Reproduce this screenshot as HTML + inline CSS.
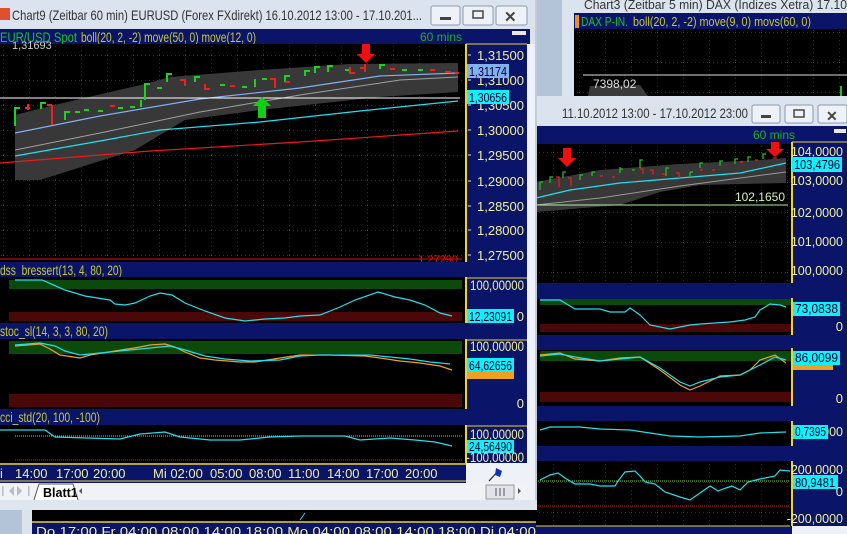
<!DOCTYPE html>
<html><head><meta charset="utf-8"><style>
html,body{margin:0;padding:0;width:847px;height:534px;overflow:hidden;background:#c8d4e4}
svg{display:block}
text{font-family:"Liberation Sans",sans-serif}
</style></head><body>
<svg width="847" height="534" viewBox="0 0 847 534" xmlns="http://www.w3.org/2000/svg">
<defs>
<pattern id="g" width="26" height="25" patternUnits="userSpaceOnUse" x="3" y="5">
<line x1="0" y1="0" x2="0" y2="25" stroke="#5a5a5a" stroke-dasharray="1,3"/>
<line x1="0" y1="0" x2="26" y2="0" stroke="#5a5a5a" stroke-dasharray="1,3"/>
</pattern>
<pattern id="g2" width="26" height="30" patternUnits="userSpaceOnUse" x="7" y="2">
<line x1="0" y1="0" x2="0" y2="30" stroke="#5a5a5a" stroke-dasharray="1,3"/>
<line x1="0" y1="0" x2="26" y2="0" stroke="#5a5a5a" stroke-dasharray="1,3"/>
</pattern>
</defs>

<rect x="0" y="0" width="847" height="534" fill="#c6d2e2"/>

<!-- BACK WINDOW DAX -->
<rect x="536" y="0" width="26" height="100" fill="#b4c4d8"/>
<rect x="562" y="0" width="285" height="100" fill="#dbe3ee"/>
<text x="584" y="9" font-size="13" fill="#333" textLength="263" lengthAdjust="spacingAndGlyphs">Chart3 (Zeitbar 5 min)  DAX (Indizes Xetra) 17.10</text>
<rect x="574" y="13" width="273" height="16" fill="#0a1468"/>
<rect x="575" y="15" width="4" height="13" fill="#f09010"/>
<text x="581" y="26" font-size="13" fill="#20c020" textLength="47" lengthAdjust="spacingAndGlyphs">DAX P-IN.</text>
<text x="633" y="26" font-size="13" fill="#c8c830" textLength="178" lengthAdjust="spacingAndGlyphs">boll(20, 2, -2) move(9, 0) movs(60, 0)</text>
<rect x="574" y="29" width="273" height="70" fill="#000"/>
<rect x="574" y="29" width="273" height="70" fill="url(#g2)"/>
<line x1="583" y1="75" x2="847" y2="75" stroke="#ddd" stroke-width="1"/>
<path d="M588 96 L590 86 L640 85 L648 96Z" fill="#3a3a3a"/>
<text x="593" y="88" font-size="12" fill="#ddd">7398,02</text>
<rect x="840" y="86" width="2" height="10" fill="#20c020"/>

<!-- RIGHT FRONT WINDOW -->
<rect x="536" y="96" width="311" height="438" fill="#dbe3ee"/>
<text x="562" y="118" font-size="13.5" fill="#333" textLength="186" lengthAdjust="spacingAndGlyphs">11.10.2012 13:00 - 17.10.2012 23:00</text>
<g fill="#eef2f8" stroke="#8a98aa"><rect x="752" y="105" width="28" height="18" rx="2"/><rect x="785" y="105" width="28" height="18" rx="2"/><rect x="818" y="105" width="29" height="18" rx="2"/></g>
<rect x="761" y="115" width="10" height="3" fill="#444"/>
<rect x="794" y="110" width="10" height="7" fill="none" stroke="#444" stroke-width="1.5"/>
<text x="826" y="121" font-size="14" fill="#444" font-weight="bold">✕</text>
<rect x="536" y="126" width="311" height="18" fill="#0a1468"/>
<rect x="834" y="129" width="12" height="4" fill="#e8e8e8"/>
<text x="753" y="139" font-size="12" fill="#20b020">60 mins</text>
<rect x="536" y="144" width="256" height="139" fill="#000"/>
<rect x="536" y="144" width="256" height="139" fill="url(#g2)"/>
<rect x="792" y="142" width="55" height="141" fill="#0a1468"/>
<line x1="792" y1="142" x2="792" y2="283" stroke="#e8d040" stroke-width="2"/>
<line x1="792" y1="142" x2="847" y2="142" stroke="#e8d040" stroke-width="1"/>
<path d="M536 182 L600 170 L680 164 L760 160 L786 158 L786 183 L700 185 L660 192 L620 205 L536 212Z" fill="#383838"/>
<polyline points="536,205 600,198 680,186 786,172" fill="none" stroke="#999" stroke-width="1"/>
<polyline points="536,198 570,190 620,183 680,178 740,173 786,163" fill="none" stroke="#20e0f0" stroke-width="1.2"/>
<line x1="536" y1="205" x2="788" y2="205" stroke="#b0f0a0" stroke-width="1"/>
<text x="785" y="201" font-size="12" fill="#d0f0c0" text-anchor="end">102,1650</text>
<g stroke="#20c020" stroke-width="1.3" fill="none">
<path d="M540 190v-8h3M550 183v-6h3M563 178v-6h3M580 180v-5h3M592 176v-4h3M620 173v-6M620 169h3M632 170h3M640 168v-8h3M666 176v-8h3M690 178v-6M690 172h3M700 168v-5h3M720 166v-5h3M735 164v-5h3M748 162v-5h3M763 159v-5h3"/>
</g>
<g stroke="#e02020" stroke-width="1.3" fill="none">
<path d="M556 177h3v10M568 178h3v8M600 176h3M612 177h3M640 169h3v5M650 170h3v5M662 174h3M676 173h3v5M700 170h3M712 170h3M740 162h3M755 160h3M773 158h4"/>
</g>
<path d="M563 148h8v10h5l-9 9-9-9h5z" fill="#f01010"/>
<path d="M771 142h8v7h5l-9 8-9-8h5z" fill="#f01010"/>
<g font-size="12.5" fill="#f0f0a0" text-anchor="end"><text x="843" y="156">104,0000</text><text x="843" y="185">103,0000</text><text x="843" y="217">102,0000</text><text x="843" y="246">101,0000</text><text x="843" y="275">100,0000</text></g>
<rect x="792" y="157" width="50" height="15" fill="#10f0f8"/>
<text x="794" y="169" font-size="12.5" fill="#003" textLength="46" lengthAdjust="spacingAndGlyphs">103,4796</text>
<!-- right panels -->
<rect x="536" y="283" width="311" height="16" fill="#0a1468"/>
<rect x="536" y="299" width="256" height="36" fill="#000"/>
<rect x="540" y="299" width="252" height="6" fill="#0c4a0c"/><rect x="540" y="324" width="252" height="8" fill="#4a0808"/>
<polyline points="540,300 560,300 575,309 600,309 610,312 625,312 630,308 640,315 650,325 670,329 680,327 690,325 700,324 730,322 745,320 755,317 760,310 770,304 780,305 786,307" fill="none" stroke="#20e0f0" stroke-width="1.2"/>
<rect x="792" y="298" width="55" height="37" fill="#0a1468"/><line x1="792" y1="298" x2="792" y2="335" stroke="#e8d040" stroke-width="2"/>
<rect x="793" y="302" width="47" height="14" fill="#10f0f8"/><text x="795" y="313" font-size="12.5" fill="#003" textLength="43" lengthAdjust="spacingAndGlyphs">73,0838</text>
<text x="843" y="331" font-size="13" fill="#f0f0a0" text-anchor="end">0</text>
<rect x="536" y="335" width="311" height="15" fill="#0a1468"/>
<rect x="536" y="350" width="256" height="56" fill="#000"/>
<rect x="540" y="351" width="252" height="10" fill="#0c4a0c"/><rect x="540" y="392" width="252" height="10" fill="#4a0808"/>
<polyline points="540,355 560,353 575,359 600,361 620,358 640,357 660,370 680,385 690,390 700,386 720,376 740,375 750,370 760,360 775,355 786,363" fill="none" stroke="#f0a020" stroke-width="1.2"/>
<polyline points="540,356 560,354 575,357 600,361 620,359 640,357 660,368 680,382 690,386 700,382 720,377 740,375 760,365 775,357 786,360" fill="none" stroke="#20e0f0" stroke-width="1.2"/>
<rect x="792" y="348" width="55" height="58" fill="#0a1468"/><line x1="792" y1="348" x2="792" y2="406" stroke="#e8d040" stroke-width="2"/>
<rect x="793" y="360" width="40" height="10" fill="#f0a020"/>
<rect x="793" y="351" width="47" height="14" fill="#10f0f8"/><text x="795" y="362" font-size="12.5" fill="#003" textLength="43" lengthAdjust="spacingAndGlyphs">86,0099</text>
<text x="843" y="403" font-size="13" fill="#f0f0a0" text-anchor="end">0</text>
<rect x="536" y="406" width="311" height="15" fill="#0a1468"/>
<rect x="536" y="421" width="256" height="25" fill="#000"/>
<polyline points="540,430 550,427 580,427 600,429 630,430 650,433 670,436 700,437 740,436 760,433 786,432" fill="none" stroke="#20e0f0" stroke-width="1.2"/>
<rect x="792" y="421" width="55" height="25" fill="#0a1468"/><line x1="792" y1="421" x2="792" y2="446" stroke="#e8d040" stroke-width="2"/>
<text x="843" y="436" font-size="12.5" fill="#f0f0a0" text-anchor="end">000</text>
<rect x="793" y="425" width="35" height="14" fill="#10f0f8"/><text x="795" y="436" font-size="12.5" fill="#003" textLength="31" lengthAdjust="spacingAndGlyphs">0,7395</text>
<rect x="536" y="446" width="311" height="15" fill="#0a1468"/>
<rect x="536" y="461" width="256" height="65" fill="#000"/>
<rect x="536" y="461" width="256" height="65" fill="url(#g2)"/>
<line x1="536" y1="481" x2="790" y2="481" stroke="#80e040" stroke-dasharray="1,1"/>
<line x1="536" y1="506" x2="790" y2="506" stroke="#e02020" stroke-dasharray="1,1"/>
<polyline points="540,480 550,475 558,473 565,478 575,484 590,484 600,486 615,486 618,481 625,472 635,471 640,476 645,482 655,484 665,492 680,497 690,500 700,493 710,486 718,491 726,488 732,486 740,490 748,482 760,479 775,476 780,470 790,471" fill="none" stroke="#20e0f0" stroke-width="1.2"/>
<rect x="792" y="461" width="55" height="65" fill="#0a1468"/><line x1="792" y1="461" x2="792" y2="526" stroke="#e8d040" stroke-width="2"/>
<text x="843" y="474" font-size="12.5" fill="#f0f0a0" text-anchor="end">200,0000</text>
<rect x="793" y="475" width="45" height="14" fill="#10f0f8"/><text x="795" y="487" font-size="12.5" fill="#003" textLength="40" lengthAdjust="spacingAndGlyphs">80,9481</text>
<text x="843" y="496" font-size="13" fill="#f0f0a0" text-anchor="end">0</text>
<text x="843" y="523" font-size="12.5" fill="#f0f0a0" text-anchor="end">-200,0000</text>
<rect x="536" y="526" width="256" height="8" fill="#0a1468"/><line x1="536" y1="526" x2="790" y2="526" stroke="#e8d040"/>
<rect x="792" y="526" width="55" height="8" fill="#eef2f8"/>

<!-- below left window -->
<rect x="0" y="510" width="22" height="24" fill="#b4c4d8"/>
<rect x="22" y="510" width="10" height="24" fill="#dbe3ee"/>
<rect x="32" y="510" width="504" height="12" fill="#000"/>
<rect x="32" y="522" width="504" height="12" fill="#0a1468"/><line x1="32" y1="522" x2="536" y2="522" stroke="#e8d040" stroke-width="1.5"/>
<text x="36" y="536" font-size="13" fill="#f0f0a0" textLength="500" lengthAdjust="spacingAndGlyphs">Do  17:00    Fr  04:00 08:00 14:00 18:00   Mo 04:00 08:00 14:00 18:00   Di 04:00</text>
<polyline points="300,520 305,513" stroke="#20e0f0" fill="none"/>

<!-- LEFT FRONT WINDOW -->
<rect x="0" y="0" width="537" height="510" fill="#dbe3ee"/>
<line x1="536" y1="0" x2="536" y2="510" stroke="#a8b4c4"/>
<rect x="0" y="8" width="10" height="12" fill="#e05030"/>
<text x="12" y="20" font-size="14" fill="#333" textLength="410" lengthAdjust="spacingAndGlyphs">Chart9 (Zeitbar 60 min)  EURUSD (Forex FXdirekt) 16.10.2012 13:00 - 17.10.201...</text>
<g fill="#eef2f8" stroke="#8a98aa"><rect x="431" y="6" width="29" height="19" rx="2"/><rect x="463" y="6" width="30" height="19" rx="2"/><rect x="496" y="6" width="31" height="19" rx="2"/></g>
<rect x="440" y="17" width="11" height="3" fill="#444"/>
<rect x="473" y="11" width="10" height="7" fill="none" stroke="#444" stroke-width="1.5"/>
<text x="504" y="22" font-size="15" fill="#444" font-weight="bold">✕</text>
<rect x="0" y="29" width="530" height="15" fill="#0a1468"/>
<rect x="512" y="31" width="14" height="4" fill="#e8e8e8"/>
<text x="0" y="42" font-size="14" fill="#20c020" textLength="77" lengthAdjust="spacingAndGlyphs">EUR/USD Spot</text>
<text x="81" y="42" font-size="14" fill="#c8c830" textLength="175" lengthAdjust="spacingAndGlyphs">boll(20, 2, -2) move(50, 0) move(12, 0)</text>
<text x="462" y="41" font-size="12" fill="#20b020" text-anchor="end">60 mins</text>
<!-- main chart -->
<rect x="0" y="44" width="466" height="218" fill="#000"/>
<rect x="0" y="44" width="466" height="218" fill="url(#g)"/>
<text x="12" y="49" font-size="11" fill="#ccc">1,31693</text>
<path d="M15 115 L50 106 L145 84 L170 77 L260 70 L350 64 L458 63 L458 92 L380 97 L260 110 L185 120 L135 150 L40 180 L15 180Z" fill="#383838"/>
<polyline points="15,133 45,127 100,116 200,99 300,88 380,76 458,73" fill="none" stroke="#80b0f0" stroke-width="1.2"/>
<polyline points="15,150 100,133 200,112 300,95 400,80 458,77" fill="none" stroke="#a0a0a0" stroke-width="1"/>
<polyline points="15,156 100,141 160,130 260,122 360,111 458,101" fill="none" stroke="#20e0f0" stroke-width="1.2"/>
<polyline points="0,163 150,151 300,142 458,131" fill="none" stroke="#f01818" stroke-width="1.2"/>
<line x1="0" y1="98" x2="460" y2="98" stroke="#fff" stroke-width="1"/>
<line x1="0" y1="259" x2="462" y2="259" stroke="#e01010" stroke-width="1"/>
<text x="458" y="263" font-size="11" fill="#e01010" text-anchor="end">1,27290</text>
<g stroke="#20d020" stroke-width="2" fill="none">
<path d="M15 126v-18h5M41 109v-6h5M65 120v-8h5M75 112h5M84 110h5M98 111h5M118 108h5M130 107h5M141 107v-7M145 100v-16h5M157 88h5M167 82v-8h5M195 82v-5h5M220 85h5M242 87h5M255 87v-8M262 79h5M285 82v-6h5M305 76v-5h5M315 73v-6h5M328 72v-6h5M345 70h5M380 69v-4h5M402 70h5M418 70h5"/>
</g>
<g stroke="#f02020" stroke-width="2" fill="none">
<path d="M25 108h5M28 104v6M52 105v20M52 105h-5M110 106h5M180 80h5v6M205 84v5h5M230 86h5M270 79h5v9M285 82h5M350 67v6h5M360 68h5M365 64v8M390 69h5M430 70h5M445 72h6M455 73h4"/>
</g>
<path d="M362 44h8v10h5l-9 9-9-9h5z" fill="#f01010"/>
<path d="M262 97l9 9h-5v12h-8v-12h-5z" fill="#10d010"/>
<!-- price axis -->
<rect x="466" y="44" width="61" height="218" fill="#0a1468"/>
<line x1="466" y1="44" x2="466" y2="262" stroke="#e8d040" stroke-width="2"/>
<line x1="466" y1="44" x2="527" y2="44" stroke="#e8d040"/>
<g stroke="#ddd"><path d="M468 55h3M468 80h3M468 105h3M468 130h3M468 155h3M468 181h3M468 206h3M468 230h3M468 255h3"/></g>
<g font-size="13" fill="#f0f0a0" text-anchor="end"><text x="524" y="60">1,31500</text><text x="524" y="85">1,31000</text><text x="524" y="110">1,30500</text><text x="524" y="135">1,30000</text><text x="524" y="160">1,29500</text><text x="524" y="186">1,29000</text><text x="524" y="211">1,28500</text><text x="524" y="235">1,28000</text><text x="524" y="260">1,27500</text></g>
<rect x="467" y="64" width="42" height="14" fill="#80b0f0"/><text x="469" y="76" font-size="12.5" fill="#003" textLength="38" lengthAdjust="spacingAndGlyphs">1,31174</text>
<rect x="467" y="90" width="42" height="14" fill="#10f0f8"/><text x="469" y="102" font-size="12.5" fill="#003" textLength="38" lengthAdjust="spacingAndGlyphs">1,30656</text>
<rect x="527" y="44" width="8" height="466" fill="#eef2f8"/>
<!-- dss -->
<rect x="0" y="262" width="527" height="15" fill="#0a1468"/>
<text x="0" y="275" font-size="14" fill="#c8c830" textLength="122" lengthAdjust="spacingAndGlyphs">dss_bressert(13, 4, 80, 20)</text>
<rect x="0" y="277" width="466" height="46" fill="#000"/>
<rect x="9" y="280" width="453" height="9" fill="#0c4a0c"/><rect x="9" y="312" width="453" height="9" fill="#4a0808"/>
<polyline points="15,280 42,280 65,290 85,296 110,300 115,304 125,305 135,303 150,296 160,293 172,295 185,303 205,311 225,318 245,321 265,319 285,318 300,316 320,315 340,307 355,300 378,292 395,297 410,300 425,305 440,313 452,316" fill="none" stroke="#20e0f0" stroke-width="1.2"/>
<rect x="466" y="277" width="61" height="46" fill="#0a1468"/><line x1="466" y1="277" x2="466" y2="323" stroke="#e8d040" stroke-width="2"/><line x1="466" y1="278" x2="527" y2="278" stroke="#e8d040"/>
<text x="524" y="290" font-size="13.5" fill="#f0f0a0" text-anchor="end" textLength="54" lengthAdjust="spacingAndGlyphs">100,00000</text>
<rect x="467" y="309" width="47" height="14" fill="#10f0f8"/><text x="469" y="321" font-size="13" fill="#003" textLength="43" lengthAdjust="spacingAndGlyphs">12,23091</text>
<text x="524" y="321" font-size="13" fill="#f0f0a0" text-anchor="end">0</text>
<!-- stoc -->
<rect x="0" y="323" width="527" height="16" fill="#0a1468"/>
<text x="0" y="336" font-size="14" fill="#c8c830" textLength="108" lengthAdjust="spacingAndGlyphs">stoc_sl(14, 3, 3, 80, 20)</text>
<rect x="0" y="339" width="466" height="70" fill="#000"/>
<rect x="9" y="341" width="453" height="13" fill="#0c4a0c"/><rect x="9" y="394" width="453" height="13" fill="#4a0808"/>
<polyline points="15,346 40,344 50,349 60,355 80,358 90,355 115,351 140,347 150,345 165,344 175,347 185,352 200,358 215,360 240,362 255,362 280,358 300,355 330,355 365,356 380,358 400,361 420,363 440,366 452,370" fill="none" stroke="#f0a020" stroke-width="1.2"/>
<polyline points="15,345 40,343 55,346 65,351 80,355 100,353 130,350 150,348 170,346 185,350 205,356 225,359 250,361 280,360 300,356 320,355 370,355 390,357 410,359 430,362 450,364" fill="none" stroke="#20e0f0" stroke-width="1.2"/>
<rect x="466" y="339" width="61" height="70" fill="#0a1468"/><line x1="466" y1="339" x2="466" y2="409" stroke="#e8d040" stroke-width="2"/><line x1="466" y1="340" x2="527" y2="340" stroke="#e8d040"/>
<text x="524" y="351" font-size="13.5" fill="#f0f0a0" text-anchor="end" textLength="54" lengthAdjust="spacingAndGlyphs">100,00000</text>
<rect x="467" y="369" width="47" height="10" fill="#f0a020"/>
<rect x="467" y="358" width="47" height="14" fill="#10f0f8"/><text x="469" y="370" font-size="13" fill="#003" textLength="43" lengthAdjust="spacingAndGlyphs">64,62656</text>
<text x="524" y="408" font-size="13" fill="#f0f0a0" text-anchor="end">0</text>
<!-- cci -->
<rect x="0" y="409" width="527" height="16" fill="#0a1468"/>
<text x="0" y="422" font-size="14" fill="#c8c830" textLength="100" lengthAdjust="spacingAndGlyphs">cci_std(20, 100, -100)</text>
<rect x="0" y="425" width="466" height="38" fill="#000"/>
<line x1="15" y1="436" x2="462" y2="436" stroke="#80e040" stroke-dasharray="1,1"/>
<line x1="15" y1="460" x2="462" y2="460" stroke="#e02020" stroke-dasharray="1,1"/>
<polyline points="0,430 45,430 55,437 120,439 140,434 165,432 180,437 210,440 240,440 270,437 300,436 345,436 360,440 390,438 415,440 435,442 452,446" fill="none" stroke="#20e0f0" stroke-width="1.2"/>
<rect x="466" y="425" width="61" height="38" fill="#0a1468"/><line x1="466" y1="425" x2="466" y2="463" stroke="#e8d040" stroke-width="2"/><line x1="466" y1="426" x2="527" y2="426" stroke="#e8d040"/>
<text x="524" y="439" font-size="13.5" fill="#f0f0a0" text-anchor="end" textLength="54" lengthAdjust="spacingAndGlyphs">100,00000</text>
<rect x="467" y="440" width="47" height="13" fill="#10f0f8"/><text x="469" y="451" font-size="13" fill="#003" textLength="43" lengthAdjust="spacingAndGlyphs">24,56490</text>
<text x="524" y="462" font-size="13.5" fill="#f0f0a0" text-anchor="end" textLength="58" lengthAdjust="spacingAndGlyphs">-100,00000</text>
<!-- time axis -->
<rect x="0" y="463" width="466" height="20" fill="#0a1468"/>
<line x1="0" y1="464" x2="466" y2="464" stroke="#e8d040" stroke-width="1.5"/>
<line x1="0" y1="481" x2="466" y2="481" stroke="#e8d040"/>
<g font-size="13" fill="#f0f0a0"><text x="0" y="478">i</text><text x="15" y="478">14:00</text><text x="56" y="478">17:00</text><text x="93" y="478">20:00</text><text x="153" y="478">Mi 02:00</text><text x="210" y="478">05:00</text><text x="249" y="478">08:00</text><text x="288" y="478">11:00</text><text x="327" y="478">14:00</text><text x="366" y="478">17:00</text><text x="405" y="478">20:00</text></g>
<rect x="466" y="463" width="61" height="20" fill="#eef2f8"/>
<path d="M489 481 L499 470" stroke="#222" stroke-width="1.2"/><path d="M496 468 l6 3 -2 6 -5 -2z" fill="#1030c0"/>
<!-- tabs row -->
<rect x="0" y="483" width="527" height="17" fill="#f0f2f6"/>
<g fill="#b8bcc4"><rect x="2" y="486" width="1.5" height="10"/><path d="M9 491l5 -5v10z"/><path d="M22 491l-5 -5v10z"/><rect x="28" y="486" width="1.5" height="10"/></g>
<path d="M34 500 L39 484 L73 484 L78 500" fill="#fff" stroke="#555"/>
<text x="43" y="497" font-size="12.5" font-weight="bold" fill="#000">Blatt1</text>
<path d="M79 491l3 -3v6z" fill="#555"/>
<rect x="486" y="485" width="28" height="14" fill="#e0e4ea" stroke="#999"/>
<path d="M496 488v8M500 488v8M504 488v8" stroke="#555"/>
<path d="M518 488l3 3 -3 3z" fill="#555"/>
<rect x="0" y="500" width="537" height="10" fill="#dfe6f0"/>
</svg>
</body></html>
